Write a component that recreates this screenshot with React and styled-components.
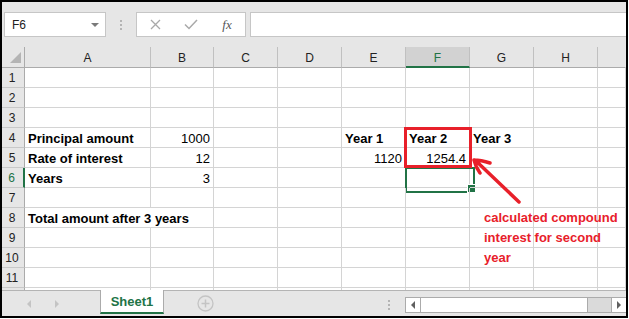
import React from 'react'
import styled, { createGlobalStyle, css } from 'styled-components'

const GREEN = '#217346'
const RED = '#e8202a'
const GRID = '#d4d4d4'
const HEAD = '#e6e6e6'
const EDGE = '#ababab'

const COLS = ['A', 'B', 'C', 'D', 'E', 'F', 'G', 'H', '']
const ROWS = [1, 2, 3, 4, 5, 6, 7, 8, 9, 10, 11, 12]

// cell contents, keyed by row then column
const data = {
  4: {
    A: { text: 'Principal amount', bold: true },
    B: { text: '1000', right: true },
    E: { text: 'Year 1', bold: true },
    F: { text: 'Year 2', bold: true },
    G: { text: 'Year 3', bold: true },
  },
  5: {
    A: { text: 'Rate of interest', bold: true },
    B: { text: '12', right: true },
    E: { text: '1120', right: true },
    F: { text: '1254.4', right: true },
  },
  6: {
    A: { text: 'Years', bold: true },
    B: { text: '3', right: true },
  },
  8: {
    A: { text: 'Total amount after 3 years', bold: true, span: 2 },
  },
}

const GlobalStyle = createGlobalStyle`
  * { box-sizing: border-box; }
  body {
    margin: 0;
    background: #fff;
    font-family: "Liberation Sans", Arial, sans-serif;
  }
`

const Window = styled.div`
  width: 628px;
  height: 318px;
  border: 2px solid #000;
  display: flex;
  flex-direction: column;
  background: ${HEAD};
  overflow: hidden;
`

const Toolbar = styled.div`
  height: 45px;
  flex-shrink: 0;
  display: flex;
  align-items: center;
  padding-left: 2px;
`

const NameBox = styled.div`
  width: 102px;
  height: 25px;
  background: #fff;
  border: 1px solid #c6c6c6;
  display: flex;
  align-items: center;
  justify-content: space-between;
  padding: 0 6px 0 7px;
  font-size: 12px;
  color: #222;
`

const Caret = styled.span`
  width: 0;
  height: 0;
  border-left: 4px solid transparent;
  border-right: 4px solid transparent;
  border-top: 4px solid #7a7a7a;
`

const Grip = styled.div`
  width: ${(p) => p.$width}px;
  display: flex;
  flex-direction: column;
  align-items: center;
  gap: 2px;

  span {
    width: 2px;
    height: 2px;
    background: #b4b4b4;
  }
`

const FxBox = styled.div`
  height: 25px;
  display: flex;
  background: #fff;
  border: 1px solid #c6c6c6;
`

const FxSlot = styled.div`
  width: 36px;
  display: flex;
  align-items: center;
  justify-content: center;
`

const FxLabel = styled.span`
  font-family: "Liberation Serif", "Times New Roman", serif;
  font-style: italic;
  font-size: 13px;
  color: #555;
`

const FormulaInput = styled.div`
  flex: 1;
  height: 25px;
  margin-left: 4px;
  background: #fff;
  border: 1px solid #c6c6c6;
  border-right: none;
`

const Sheet = styled.div`
  position: relative;
  height: 243px;
  flex-shrink: 0;
  overflow: hidden;
  display: grid;
  grid-template-columns: 23px 126px 63px repeat(6, 64px) 1fr;
  grid-template-rows: 21px repeat(12, 20px);
  background: #fff;
`

const Corner = styled.div`
  background: ${HEAD};
  border-right: 1px solid ${EDGE};
  border-bottom: 1px solid ${EDGE};
  display: flex;
  align-items: flex-end;
  justify-content: flex-end;
  padding: 0 3px 4px 0;
`

const ColHead = styled.div`
  background: ${(p) => (p.$active ? '#d2d2d2' : HEAD)};
  color: ${(p) => (p.$active ? GREEN : '#222')};
  border-right: 1px solid ${(p) => (p.$last ? 'transparent' : '#c0c0c0')};
  border-bottom: ${(p) => (p.$active ? `2px solid ${GREEN}` : `1px solid ${EDGE}`)};
  font-size: 12px;
  display: flex;
  align-items: center;
  justify-content: center;
  padding-top: 2px;
`

const RowHead = styled.div`
  background: ${HEAD};
  color: ${(p) => (p.$active ? GREEN : '#222')};
  border-right: ${(p) => (p.$active ? `2px solid ${GREEN}` : `1px solid ${EDGE}`)};
  border-bottom: 1px solid #c8c8c8;
  font-size: 12px;
  display: flex;
  align-items: center;
  justify-content: center;
  padding-right: 2px;
`

const Cell = styled.div`
  position: relative;
  border-right: 1px solid ${GRID};
  border-bottom: 1px solid ${GRID};
  padding: 0 3px;
  font-size: 13px;
  line-height: 21px;
  color: #000;
  white-space: nowrap;
  font-weight: ${(p) => (p.$bold ? 700 : 400)};
  text-align: ${(p) => (p.$right ? 'right' : 'left')};
  grid-column: span ${(p) => p.$span || 1};

  ${(p) =>
    p.$selected &&
    css`
      &::before {
        content: '';
        position: absolute;
        left: -1px;
        top: -1px;
        width: 66px;
        height: 22px;
        border: 2px solid ${GREEN};
      }
      &::after {
        content: '';
        position: absolute;
        left: 61px;
        top: 16px;
        width: 7px;
        height: 7px;
        background: ${GREEN};
        border: 1px solid #fff;
      }
    `}
`

const RedBox = styled.div`
  position: absolute;
  left: 402px;
  top: 80px;
  width: 68px;
  height: 41px;
  border: 3px solid ${RED};
`

const Arrow = styled.svg`
  position: absolute;
  left: 460px;
  top: 100px;
  overflow: visible;
`

const Note = styled.div`
  position: absolute;
  left: 482px;
  top: 161px;
  color: ${RED};
  font-size: 13px;
  font-weight: 700;
  line-height: 20px;
`

const TabBar = styled.div`
  flex: 1;
  display: flex;
  align-items: center;
  border-top: 1px solid #b4b4b4;
  margin-top: 0;
`

const NavGroup = styled.div`
  width: 98px;
  align-self: stretch;
  display: flex;
  align-items: center;
  gap: 24px;
  padding-left: 25px;
`

const NavArrow = styled.span`
  width: 0;
  height: 0;
  border-top: 4px solid transparent;
  border-bottom: 4px solid transparent;
  ${(p) =>
    p.$dir === 'left'
      ? css`border-right: 4px solid #c4c4c4;`
      : css`border-left: 4px solid #c4c4c4;`}
`

const SheetTab = styled.div`
  align-self: flex-start;
  margin-top: -1px;
  width: 64px;
  height: 24px;
  background: #fff;
  border-left: 1px solid ${EDGE};
  border-right: 1px solid ${EDGE};
  border-bottom: 2px solid ${GREEN};
  color: ${GREEN};
  font-size: 13px;
  font-weight: 700;
  display: flex;
  align-items: center;
  justify-content: center;
  padding-top: 1px;
`

const AddSheet = styled.svg`
  margin-left: 33px;
`

const ScrollGroup = styled.div`
  margin-left: auto;
  display: flex;
  align-items: center;
  margin-top: 2px;
`

const ScrollBar = styled.div`
  width: 221px;
  height: 16px;
  display: flex;
  background: #dadada;
  border: 1px solid ${EDGE};
  border-right: none;
`

const ScrollButton = styled.div`
  width: 15px;
  background: #fff;
  display: flex;
  align-items: center;
  justify-content: center;
  ${(p) => (p.$side === 'left' ? `border-right: 1px solid ${EDGE};` : `border-left: 1px solid ${EDGE};`)}
`

const ScrollThumb = styled.div`
  width: 167px;
  background: #fff;
  border-right: 1px solid ${EDGE};
`

const ScrollTri = styled.span`
  width: 0;
  height: 0;
  border-top: 4px solid transparent;
  border-bottom: 4px solid transparent;
  ${(p) =>
    p.$dir === 'left'
      ? css`border-right: 4px solid #606060;`
      : css`border-left: 4px solid #606060;`}
`

const Dots = ({ width }) => (
  <Grip $width={width}>
    <span />
    <span />
    <span />
  </Grip>
)

function renderRow(r) {
  const row = data[r] || {}
  const cells = [
    <RowHead key={`h${r}`} $active={r === 6}>
      {r <= 11 ? r : ''}
    </RowHead>,
  ]
  let skip = 0
  COLS.forEach((c, i) => {
    if (skip > 0) {
      skip -= 1
      return
    }
    const cell = row[c]
    if (cell && cell.span) skip = cell.span - 1
    cells.push(
      <Cell
        key={`${r}-${i}`}
        $bold={cell && cell.bold}
        $right={cell && cell.right}
        $span={cell && cell.span}
        $selected={r === 6 && c === 'F'}
      >
        {cell ? cell.text : ''}
      </Cell>
    )
  })
  return cells
}

export default function App() {
  return (
    <>
      <GlobalStyle />
      <Window>
        <Toolbar>
          <NameBox>
            F6
            <Caret />
          </NameBox>
          <Dots width={30} />
          <FxBox>
            <FxSlot>
              <svg width="11" height="11" viewBox="0 0 11 11">
                <path d="M1 1 L10 10 M10 1 L1 10" stroke="#a9a9a9" strokeWidth="1.3" fill="none" />
              </svg>
            </FxSlot>
            <FxSlot>
              <svg width="14" height="11" viewBox="0 0 14 11">
                <path d="M1 5.5 L5 9.5 L13 1" stroke="#a9a9a9" strokeWidth="1.5" fill="none" />
              </svg>
            </FxSlot>
            <FxSlot>
              <FxLabel>fx</FxLabel>
            </FxSlot>
          </FxBox>
          <FormulaInput />
        </Toolbar>

        <Sheet>
          <Corner>
            <svg width="11" height="11" viewBox="0 0 11 11">
              <path d="M11 0 L11 11 L0 11 Z" fill="#b4b4b4" />
            </svg>
          </Corner>
          {COLS.map((c, i) => (
            <ColHead key={`c${i}`} $active={c === 'F'} $last={i === COLS.length - 1}>
              {c}
            </ColHead>
          ))}
          {ROWS.map((r) => renderRow(r))}

          <RedBox />
          <Arrow width="70" height="70" viewBox="0 0 70 70">
            <path
              d="M57 55 L13 13 M12 13 C17 13 22 14 28 16 M12 13 C13 17 15 22 18 26"
              stroke={RED}
              strokeWidth="3.5"
              strokeLinecap="round"
              fill="none"
            />
          </Arrow>
          <Note>
            calculated compound
            <br />
            interest for second
            <br />
            year
          </Note>
        </Sheet>

        <TabBar>
          <NavGroup>
            <NavArrow $dir="left" />
            <NavArrow $dir="right" />
          </NavGroup>
          <SheetTab>Sheet1</SheetTab>
          <AddSheet width="17" height="17" viewBox="0 0 17 17">
            <circle cx="8.5" cy="8.5" r="7.5" stroke="#c4c4c4" strokeWidth="1.3" fill="none" />
            <path d="M8.5 4.5 V12.5 M4.5 8.5 H12.5" stroke="#c4c4c4" strokeWidth="1.5" />
          </AddSheet>
          <ScrollGroup>
            <Dots width={32} />
            <ScrollBar>
              <ScrollButton $side="left">
                <ScrollTri $dir="left" />
              </ScrollButton>
              <ScrollThumb />
              <div style={{ flex: 1 }} />
              <ScrollButton $side="right">
                <ScrollTri $dir="right" />
              </ScrollButton>
            </ScrollBar>
          </ScrollGroup>
        </TabBar>
      </Window>
    </>
  )
}
